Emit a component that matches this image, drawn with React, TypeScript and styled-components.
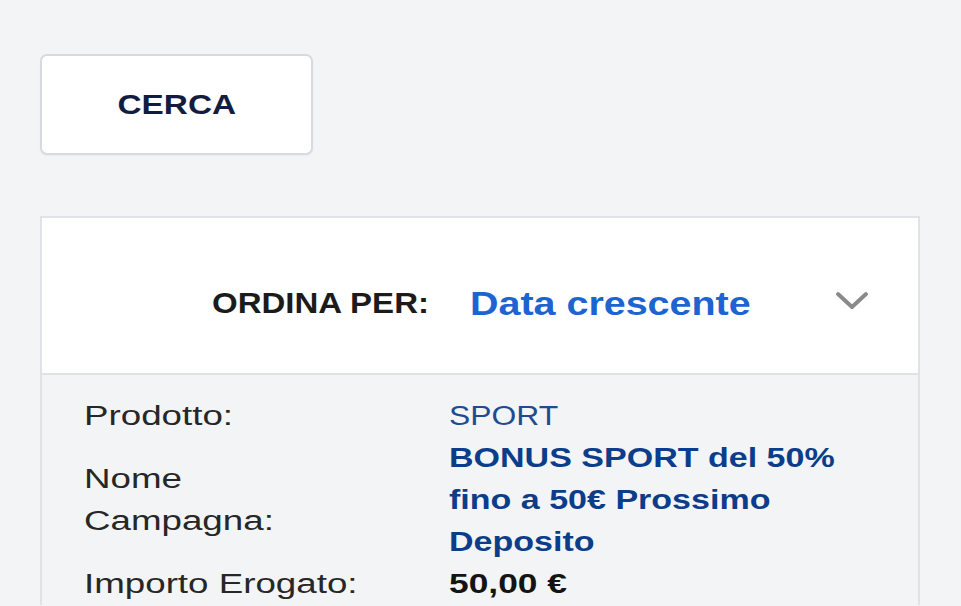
import React from "react";
import styled, { createGlobalStyle } from "styled-components";

const GlobalStyle = createGlobalStyle`
  html, body {
    margin: 0;
    padding: 0;
    background: #f3f4f6;
    font-family: "Liberation Sans", Arial, sans-serif;
  }
  * { box-sizing: border-box; }
`;

const Page = styled.main`
  width: 961px;
  height: 606px;
  overflow: hidden;
  padding: 54px 0 0 40px;
  background: #f3f4f6;
`;

const SearchButton = styled.button`
  width: 273px;
  height: 101px;
  display: flex;
  align-items: center;
  justify-content: center;
  background: #ffffff;
  border: 2px solid #d7dade;
  border-radius: 7px;
  box-shadow: 0 1px 2px rgba(0, 0, 0, 0.04);
  padding: 0;
  cursor: pointer;
  font-family: inherit;
`;

const ButtonLabel = styled.span`
  display: inline-block;
  font-size: 28px;
  font-weight: 700;
  color: #111c3f;
  transform: scaleX(1.19);
  transform-origin: center;
`;

const Card = styled.section`
  margin-top: 61px;
  width: 880px;
  border: 2px solid #dfe2e6;
  border-bottom: none;
  background: #f3f4f6;
`;

const CardHeader = styled.div`
  height: 157px;
  padding: 15px 49px 0 170px;
  display: grid;
  grid-template-columns: 258px 1fr auto;
  align-items: center;
  background: #ffffff;
  border-bottom: 2px solid #dfe2e6;
`;

const SortLabel = styled.span`
  display: inline-block;
  font-size: 30px;
  font-weight: 700;
  color: #1b1b1b;
  white-space: nowrap;
  transform: scaleX(1.1);
  transform-origin: left center;
`;

const SortValue = styled.span`
  display: inline-block;
  font-size: 34px;
  font-weight: 700;
  color: #1d63d1;
  white-space: nowrap;
  transform: scaleX(1.16);
  transform-origin: left center;
`;

const Chevron = styled.svg`
  display: block;
  width: 34px;
  height: 20px;
  margin-bottom: 5px;
`;

const Details = styled.dl`
  margin: 0;
  padding: 20px 0 0 42px;
  display: grid;
  grid-template-columns: 365px 1fr;
`;

const FieldLabel = styled.dt`
  margin: 0;
  align-self: center;
  font-size: 27px;
  line-height: 42px;
  color: #272727;
  white-space: nowrap;
  transform: scaleX(1.36);
  transform-origin: left center;
`;

type ValueKind = "product" | "campaign" | "amount";

const valueStyles: Record<ValueKind, { color: string; weight: number; sx: number }> = {
  product: { color: "#1e4c8f", weight: 400, sx: 1.18 },
  campaign: { color: "#0b3d8a", weight: 700, sx: 1.26 },
  amount: { color: "#141414", weight: 700, sx: 1.31 },
};

const FieldValue = styled.dd<{ $kind: ValueKind }>`
  margin: 0;
  font-size: 27px;
  line-height: 42px;
  white-space: nowrap;
  color: ${(p) => valueStyles[p.$kind].color};
  font-weight: ${(p) => valueStyles[p.$kind].weight};
  transform: scaleX(${(p) => valueStyles[p.$kind].sx});
  transform-origin: left center;
`;

const Line = styled.span`
  display: block;
`;

export default function App() {
  return (
    <>
      <GlobalStyle />
      <Page>
        <SearchButton type="button">
          <ButtonLabel>CERCA</ButtonLabel>
        </SearchButton>
        <Card>
          <CardHeader>
            <SortLabel>ORDINA PER:</SortLabel>
            <SortValue>Data crescente</SortValue>
            <Chevron viewBox="0 0 34 20" aria-hidden="true">
              <polyline
                points="3,3 17,16 31,3"
                fill="none"
                stroke="#8a8a8a"
                strokeWidth="4"
                strokeLinecap="round"
                strokeLinejoin="round"
              />
            </Chevron>
          </CardHeader>
          <Details>
            <FieldLabel>Prodotto:</FieldLabel>
            <FieldValue $kind="product">SPORT</FieldValue>
            <FieldLabel>
              <Line>Nome</Line>
              <Line>Campagna:</Line>
            </FieldLabel>
            <FieldValue $kind="campaign">
              <Line>BONUS SPORT del 50%</Line>
              <Line>fino a 50€ Prossimo</Line>
              <Line>Deposito</Line>
            </FieldValue>
            <FieldLabel>Importo Erogato:</FieldLabel>
            <FieldValue $kind="amount">50,00 €</FieldValue>
          </Details>
        </Card>
      </Page>
    </>
  );
}
